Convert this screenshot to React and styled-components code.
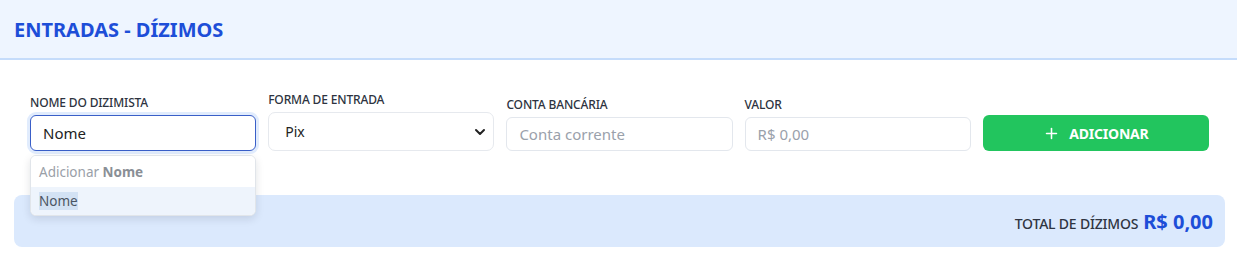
import React from "react";
import styled, { createGlobalStyle } from "styled-components";
import { ChevronDown, Plus } from "lucide-react";

const GlobalStyle = createGlobalStyle`
  body {
    margin: 0;
    background: #fff;
    font-family: "Noto Sans", "Open Sans", sans-serif;
    color: #1f2937;
  }
`;

const Header = styled.header`
  height: 58px;
  display: flex;
  align-items: center;
  padding: 0 14px;
  background: #eef5ff;
  border-bottom: 2px solid #c5dcfb;
`;

const Title = styled.h1`
  margin: 0;
  font-size: 20px;
  font-weight: 700;
  color: #1d4ed8;
`;

const Content = styled.main`
  padding: 0 12px 0 14px;
`;

const Form = styled.form`
  display: grid;
  grid-template-columns: repeat(5, 1fr);
  gap: 12px;
  align-items: end;
  padding: 32px 16px 0;
`;

const Field = styled.div`
  position: relative;
  display: flex;
  flex-direction: column;
  gap: 4px;
`;

const Label = styled.label`
  font-size: 12px;
  line-height: 16px;
  font-weight: 500;
  color: #2d3340;
  letter-spacing: -0.15px;
`;

const Input = styled.input`
  box-sizing: border-box;
  width: 100%;
  height: ${(p) => (p.$focused ? "36px" : "34px")};
  padding: 0 12px;
  border: ${(p) => (p.$focused ? "1.5px solid #3a5fc8" : "1px solid #e3e7ed")};
  border-radius: 6px;
  box-shadow: ${(p) => (p.$focused ? "0 0 0 3px #e1ecfd" : "none")};
  font-family: inherit;
  font-size: 15px;
  color: #222;
  outline: none;
  background: #fff;

  &::placeholder {
    color: #9aa1ab;
  }
`;

const SelectWrap = styled.div`
  position: relative;
`;

const Select = styled.select`
  box-sizing: border-box;
  width: 100%;
  height: 39px;
  padding: 0 16px;
  border: 1px solid #e6e9ee;
  border-radius: 7px;
  background: #fff;
  font-family: inherit;
  font-size: 14px;
  color: #222;
  appearance: none;
  outline: none;
`;

const Chevron = styled(ChevronDown)`
  position: absolute;
  right: 6px;
  top: 50%;
  transform: translateY(-50%);
  pointer-events: none;
  color: #222;
`;

const Suggestions = styled.ul`
  position: absolute;
  top: calc(100% + 4px);
  left: 0;
  right: 0;
  margin: 0;
  padding: 0;
  list-style: none;
  background: #fff;
  border: 1px solid #e1e5ea;
  border-radius: 6px;
  box-shadow: 0 3px 8px rgba(15, 23, 42, 0.12);
  overflow: hidden;
  z-index: 2;
`;

const Suggestion = styled.li`
  display: flex;
  align-items: center;
  height: ${(p) => (p.$active ? "28px" : "31px")};
  padding: 0 8px;
  font-size: 13.5px;
  color: ${(p) => (p.$active ? "#4b5563" : "#9aa0a8")};
  background: ${(p) => (p.$active ? "#eef4fc" : "#fff")};

  b {
    font-weight: 700;
    color: #8a8f96;
  }
`;

const Selected = styled.span`
  background: #d3e2f4;
`;

const AddButton = styled.button`
  height: 36px;
  display: flex;
  align-items: center;
  justify-content: center;
  gap: 9px;
  border: none;
  border-radius: 6px;
  background: #22c55e;
  color: #fff;
  font-family: inherit;
  font-size: 14px;
  font-weight: 700;
  letter-spacing: -0.2px;
  cursor: pointer;
`;

const TotalBar = styled.div`
  margin-top: 44px;
  height: 52px;
  display: flex;
  align-items: center;
  justify-content: flex-end;
  gap: 5px;
  padding: 0 12px;
  background: #dbe9fd;
  border-radius: 8px;
`;

const TotalLabel = styled.span`
  font-size: 14px;
  font-weight: 500;
  color: #2f3542;
  letter-spacing: -0.2px;
  padding-top: 4px;
`;

const TotalValue = styled.span`
  font-size: 20px;
  font-weight: 700;
  color: #1d4ed8;
`;

export default function App() {
  return (
    <>
      <GlobalStyle />
      <Header>
        <Title>ENTRADAS - DÍZIMOS</Title>
      </Header>
      <Content>
        <Form onSubmit={(e) => e.preventDefault()}>
          <Field>
            <Label>NOME DO DIZIMISTA</Label>
            <Input $focused defaultValue="Nome" />
            <Suggestions>
              <Suggestion>
                Adicionar&nbsp;<b>Nome</b>
              </Suggestion>
              <Suggestion $active>
                <Selected>Nome</Selected>
              </Suggestion>
            </Suggestions>
          </Field>
          <Field>
            <Label>FORMA DE ENTRADA</Label>
            <SelectWrap>
              <Select defaultValue="pix">
                <option value="pix">Pix</option>
                <option value="dinheiro">Dinheiro</option>
                <option value="cartao">Cartão</option>
              </Select>
              <Chevron size={16} strokeWidth={3} />
            </SelectWrap>
          </Field>
          <Field>
            <Label>CONTA BANCÁRIA</Label>
            <Input placeholder="Conta corrente" />
          </Field>
          <Field>
            <Label>VALOR</Label>
            <Input placeholder="R$ 0,00" />
          </Field>
          <AddButton type="submit">
            <Plus size={17} strokeWidth={2.2} />
            ADICIONAR
          </AddButton>
        </Form>
        <TotalBar>
          <TotalLabel>TOTAL DE DÍZIMOS</TotalLabel>
          <TotalValue>R$ 0,00</TotalValue>
        </TotalBar>
      </Content>
    </>
  );
}
